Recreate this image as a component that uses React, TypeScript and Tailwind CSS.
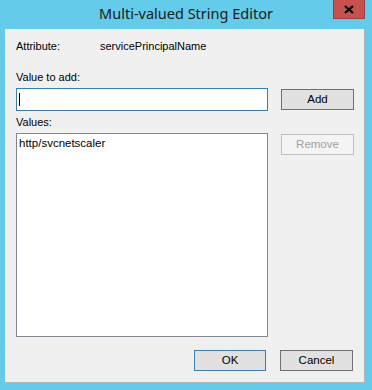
import React from "react";

// Classic Windows dialog: Multi-valued String Editor
const uiFont = { fontFamily: '"Liberation Sans", Arial, sans-serif' };
const titleFont = { fontFamily: '"Noto Sans", "Open Sans", sans-serif' };

function WinButton({
  label,
  focused = false,
  disabled = false,
  className = "",
}: {
  label: string;
  focused?: boolean;
  disabled?: boolean;
  className?: string;
}) {
  const tone = disabled
    ? "border-[#bfbfbf] bg-[#f4f4f4] text-[#a0a0a0]"
    : focused
      ? "border-[#3c7fb1] bg-[#e1e1e1] text-black"
      : "border-[#707070] bg-[#e1e1e1] text-black";
  return (
    <button
      className={`flex h-[21px] items-center justify-center border text-[11.5px] leading-none ${tone} ${className}`}
    >
      {label}
    </button>
  );
}

export default function App() {
  return (
    <div className="relative h-[390px] w-[372px] overflow-hidden bg-[#64cbea]" style={uiFont}>
      {/* title bar */}
      <div className="flex h-[29px] items-center justify-center pb-[2px]">
        <span className="text-[14.5px] text-[#1b1b1b]" style={titleFont}>
          Multi-valued String Editor
        </span>
      </div>
      <div className="absolute right-[7px] top-0 flex h-[19px] w-[32px] items-center justify-center border-x border-b border-[#9c3e3e] bg-[#c75050]">
        <svg width="10" height="9" viewBox="0 0 10 9">
          <path d="M1 1 L9 8 M9 1 L1 8" stroke="#000" strokeWidth="2.2" />
        </svg>
      </div>

      {/* dialog body */}
      <div className="ml-[5px] flex h-[354px] w-[360px] flex-col border-b border-r border-[#b4b4b4] bg-[#f0f0f0] pl-[11px] text-[11px] leading-[13px] text-black">
        <div className="mt-[11px] flex">
          <span className="w-[84px]">Attribute:</span>
          <span>servicePrincipalName</span>
        </div>

        <div className="mt-[18px]">Value to add:</div>

        <div className="mt-[4px] flex items-start">
          <div className="flex h-[23px] w-[252px] items-center border border-[#3c7fb1] bg-white pl-[2px]">
            <div className="h-[13px] w-px bg-black" />
          </div>
          <WinButton label="Add" className="ml-[13px] mt-px w-[73px]" />
        </div>

        <div className="mt-[5px]">Values:</div>

        <div className="mt-[4px] flex items-start">
          <div className="h-[204px] w-[252px] border border-[#828790] bg-white px-[2px] pt-[2px] text-[11.5px] leading-[14px]">
            http/svcnetscaler
          </div>
          <WinButton label="Remove" disabled className="ml-[13px] mt-px w-[73px]" />
        </div>

        <div className="mt-[13px] flex justify-end pr-[11px]">
          <WinButton label="OK" focused className="w-[72px]" />
          <WinButton label="Cancel" className="ml-[14px] w-[73px]" />
        </div>
      </div>
    </div>
  );
}
